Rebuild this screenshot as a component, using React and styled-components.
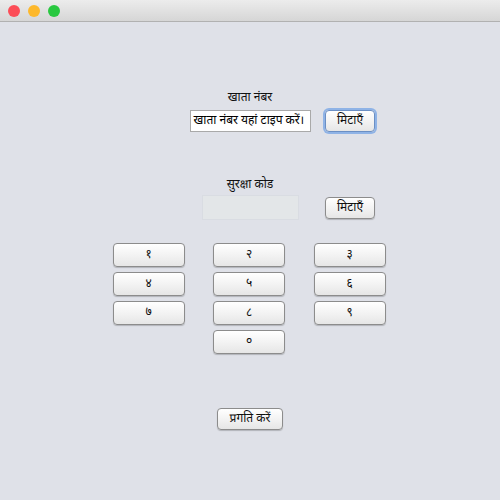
import React from "react";
import styled, { createGlobalStyle, css } from "styled-components";

const GlobalStyle = createGlobalStyle`
  html, body {
    margin: 0;
    padding: 0;
    background: #dfe1e8;
  }
  body {
    font-family: "Noto Sans Devanagari", "Lohit Devanagari", "Noto Sans", "DejaVu Sans", sans-serif;
  }
`;

const Window = styled.div`
  width: 500px;
  height: 500px;
  display: flex;
  flex-direction: column;
  background: #dfe1e8;
  overflow: hidden;
`;

const TitleBar = styled.div`
  height: 21px;
  flex-shrink: 0;
  display: flex;
  align-items: center;
  gap: 8px;
  padding-left: 8px;
  background: linear-gradient(#ececec, #d6d6d6);
  border-bottom: 1px solid #b1b1b1;
`;

const Light = styled.span`
  width: 12px;
  height: 12px;
  border-radius: 50%;
  background: ${(p) => p.color};
`;

const Form = styled.div`
  display: grid;
  grid-template-columns: 1fr 122px 1fr;
  column-gap: 14px;
  align-items: center;
`;

const Label = styled.div`
  grid-column: 2;
  justify-self: center;
  font-size: 12px;
  line-height: 14px;
  color: #111;
  margin-top: ${(p) => p.top}px;
  margin-bottom: ${(p) => p.bottom}px;
`;

const Field = styled.div`
  grid-column: 2;
  justify-self: center;
  box-sizing: border-box;
  font-size: 12px;
  color: #000;
  display: flex;
  align-items: center;
  ${(p) =>
    p.disabled
      ? css`
          width: 97px;
          height: 25px;
          background: #e3e6e8;
          border: 1px solid #d9dce2;
        `
      : css`
          width: 121px;
          height: 22px;
          padding-left: 3px;
          background: #fff;
          border: 1px solid #a9a9a9;
          white-space: nowrap;
          overflow: hidden;
        `}
`;

const Button = styled.button`
  box-sizing: border-box;
  height: ${(p) => p.h || 22}px;
  width: ${(p) => p.w}px;
  padding: 0;
  font-family: inherit;
  font-size: 12px;
  color: #111;
  border: 1px solid #8c8c8c;
  border-radius: 4px;
  background: linear-gradient(#ffffff, #f3f3f3 50%, #e6e6e6);
  box-shadow: 0 1px 1px rgba(0, 0, 0, 0.2);
  ${(p) =>
    p.focused &&
    css`
      border-color: #6b8fc4;
      box-shadow: 0 0 0 2px #8fb3e6;
    `}
`;

const SideButton = styled(Button)`
  grid-column: 3;
  justify-self: start;
`;

const Keypad = styled.div`
  display: grid;
  grid-template-columns: repeat(3, 72px);
  column-gap: 28.5px;
  row-gap: 5px;
  justify-content: center;
  margin-top: 23px;
  margin-left: -2px;
`;

const Key = styled(Button)`
  grid-column: ${(p) => p.col || "auto"};
`;

const Footer = styled.div`
  display: flex;
  justify-content: center;
  margin-top: 54px;
`;

const keys = ["१", "२", "३", "४", "५", "६", "७", "८", "९"];

export default function App() {
  return (
    <>
      <GlobalStyle />
      <Window>
        <TitleBar>
          <Light color="#fc4d57" />
          <Light color="#fdb82b" />
          <Light color="#29c840" />
        </TitleBar>

        <Form>
          <Label top={69} bottom={5}>खाता नंबर</Label>
          <Field>खाता नंबर यहां टाइप करें।</Field>
          <SideButton w={50} focused>मिटाएँ</SideButton>

          <Label top={46} bottom={3}>सुरक्षा कोड</Label>
          <Field disabled />
          <SideButton w={50}>मिटाएँ</SideButton>
        </Form>

        <Keypad>
          {keys.map((k) => (
            <Key key={k} w={72} h={24}>
              {k}
            </Key>
          ))}
          <Key w={72} h={24} col={2}>
            ०
          </Key>
        </Keypad>

        <Footer>
          <Button w={66}>प्रगति करें</Button>
        </Footer>
      </Window>
    </>
  );
}
